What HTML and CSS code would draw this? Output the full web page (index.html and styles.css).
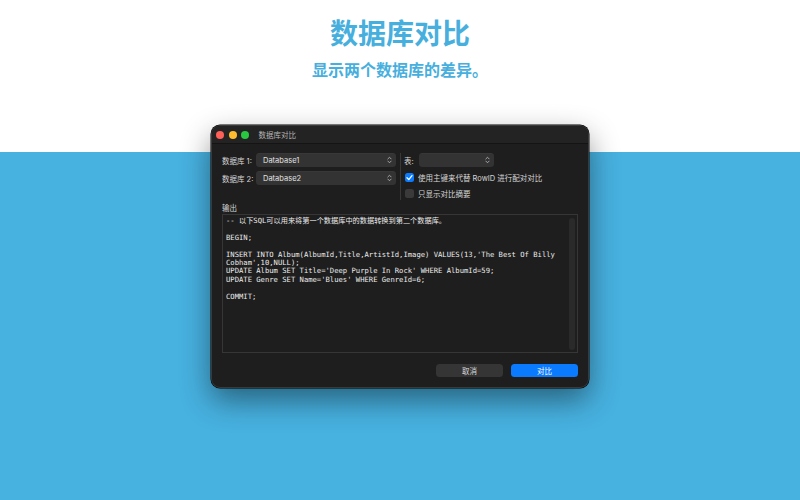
FILE: index.html
```html
<!DOCTYPE html>
<html lang="zh">
<head>
<meta charset="utf-8">
<link rel="stylesheet" href="styles.css">
</head>
<body>
<div class="page">
  <header class="hero">
    <h1 class="title">数据库对比</h1>
    <p class="subtitle">显示两个数据库的差异。</p>
  </header>
  <div class="band"></div>

  <div class="window">
    <div class="titlebar">
      <span class="light red"></span>
      <span class="light yellow"></span>
      <span class="light green"></span>
      <span class="wtitle">数据库对比</span>
    </div>
    <div class="content">
      <div class="top">
        <div class="dbcol">
          <div class="row">
            <span class="label">数据库 1:</span>
            <div class="select wide"><span>Database1</span><svg class="chev" viewBox="0 0 6 9"><path d="M1 3.2 L3 1.2 L5 3.2 M1 5.8 L3 7.8 L5 5.8" fill="none" stroke="#bbb" stroke-width="1" stroke-linecap="round" stroke-linejoin="round"/></svg></div>
          </div>
          <div class="row">
            <span class="label">数据库 2:</span>
            <div class="select wide"><span>Database2</span><svg class="chev" viewBox="0 0 6 9"><path d="M1 3.2 L3 1.2 L5 3.2 M1 5.8 L3 7.8 L5 5.8" fill="none" stroke="#bbb" stroke-width="1" stroke-linecap="round" stroke-linejoin="round"/></svg></div>
          </div>
        </div>
        <div class="divider"></div>
        <div class="optcol">
          <div class="row">
            <span class="label short">表:</span>
            <div class="select narrow"><span></span><svg class="chev" viewBox="0 0 6 9"><path d="M1 3.2 L3 1.2 L5 3.2 M1 5.8 L3 7.8 L5 5.8" fill="none" stroke="#bbb" stroke-width="1" stroke-linecap="round" stroke-linejoin="round"/></svg></div>
          </div>
          <div class="check-row">
            <span class="box on"><svg viewBox="0 0 9 9"><path d="M2 4.8 L3.8 6.6 L7 2.6" fill="none" stroke="#fff" stroke-width="1.3" stroke-linecap="round" stroke-linejoin="round"/></svg></span>
            <span class="ctext">使用主键来代替 RowID 进行配对对比</span>
          </div>
          <div class="check-row">
            <span class="box"></span>
            <span class="ctext">只显示对比摘要</span>
          </div>
        </div>
      </div>
      <div class="outlabel">输出</div>
      <div class="output">
<pre class="code">-- 以下SQL可以用来将第一个数据库中的数据转换到第二个数据库。

BEGIN;

INSERT INTO Album(AlbumId,Title,ArtistId,Image) VALUES(13,'The Best Of Billy
Cobham',10,NULL);
UPDATE Album SET Title='Deep Purple In Rock' WHERE AlbumId=59;
UPDATE Genre SET Name='Blues' WHERE GenreId=6;

COMMIT;</pre>
        <div class="scrollbar"></div>
      </div>
      <div class="footer">
        <button class="btn">取消</button>
        <button class="btn primary">对比</button>
      </div>
    </div>
  </div>
</div>
</body>
</html>
```

FILE: styles.css
```css
* { box-sizing: border-box; }
html, body { margin: 0; padding: 0; }
body {
  width: 800px;
  height: 500px;
  overflow: hidden;
  font-family: "Inter", "Noto Sans CJK SC", sans-serif;
  background: #fff;
}
.page {
  position: relative;
  width: 800px;
  height: 500px;
  display: flex;
  flex-direction: column;
}
.hero {
  height: 152px;
  display: flex;
  flex-direction: column;
  align-items: center;
  padding-top: 13px;
}
.title {
  margin: 0;
  font-family: "Noto Sans CJK SC", sans-serif;
  font-weight: 700;
  font-size: 28px;
  line-height: 38px;
  color: #47afde;
}
.subtitle {
  margin: 0;
  margin-top: 6px;
  font-family: "Noto Sans CJK SC", sans-serif;
  font-weight: 700;
  font-size: 16px;
  line-height: 24px;
  color: #47afde;
}
.band {
  flex: 1;
  background: #47b1e0;
}

.window {
  position: absolute;
  left: 211px;
  top: 125px;
  width: 378px;
  height: 263px;
  background: #1e1e1e;
  border-radius: 9px;
  border: 1px solid #3a3a3a;
  box-shadow: 0 12px 30px rgba(0,0,0,0.45), 0 0 0 0.5px #000;
  display: flex;
  flex-direction: column;
  overflow: hidden;
}
.titlebar {
  height: 18px;
  display: flex;
  align-items: center;
  padding-left: 4px;
  gap: 4.5px;
  background: #232323;
  border-bottom: 1px solid #141414;
}
.light {
  width: 8px;
  height: 8px;
  border-radius: 50%;
  display: block;
}
.red { background: #fe5f57; }
.yellow { background: #febc2e; }
.green { background: #28c840; }
.wtitle {
  margin-left: 5px;
  font-size: 7.5px;
  color: #b5b5b5;
  font-family: "Noto Sans CJK SC", sans-serif;
}
.content {
  flex: 1;
  display: flex;
  flex-direction: column;
  padding: 9px 10px 0 10px;
}
.top {
  display: flex;
  height: 47px;
}
.dbcol {
  display: flex;
  flex-direction: column;
  gap: 4px;
  width: 178px;
}
.row {
  display: flex;
  align-items: center;
  height: 14px;
}
.label {
  width: 34px;
  font-size: 7.5px;
  color: #d6d6d6;
  font-family: "Inter", "Noto Sans CJK SC", sans-serif;
}
.label.short { width: 15px; }
.select {
  height: 14px;
  background: #333333;
  border-radius: 3.5px;
  display: flex;
  align-items: center;
  justify-content: space-between;
  padding: 0 4px 0 7px;
  font-size: 7.5px;
  color: #e2e2e2;
  box-shadow: inset 0 0.5px 0 rgba(255,255,255,0.06);
}
.select.wide { width: 140px; }
.select.narrow { width: 75px; }
.chev { width: 5px; height: 8px; }
.divider {
  width: 1px;
  background: #383838;
  margin: 0 3px 0 0;
}
.optcol {
  display: flex;
  flex-direction: column;
}
.check-row {
  display: flex;
  align-items: center;
  gap: 4px;
  margin-top: 4px;
  height: 14px;
}
.check-row + .check-row { margin-top: 2px; }
.box {
  width: 9px;
  height: 9px;
  border-radius: 2.5px;
  background: #3a3a3a;
  display: flex;
  align-items: center;
  justify-content: center;
  margin-left: 1px;
}
.box.on { background: #0a7aff; }
.box svg { width: 9px; height: 9px; }
.ctext {
  font-size: 7.5px;
  color: #d6d6d6;
  font-family: "Inter", "Noto Sans CJK SC", sans-serif;
}
.outlabel {
  margin-top: 2px;
  font-size: 7.5px;
  color: #d6d6d6;
  font-family: "Noto Sans CJK SC", sans-serif;
  line-height: 11px;
}
.output {
  position: relative;
  margin-top: 1px;
  height: 139px;
  width: 356px;
  border: 1px solid #363636;
  background: #1e1e1e;
}
.code {
  margin: 0;
  padding: 2px 0 0 3px;
  font-family: "DejaVu Sans Mono", "Noto Sans CJK SC", monospace;
  font-size: 7.2px;
  line-height: 8.4px;
  color: #ececec;
  white-space: pre;
}
.scrollbar {
  position: absolute;
  right: 2px;
  top: 3px;
  bottom: 2px;
  width: 6px;
  border-radius: 3px;
  background: #2a2a2a;
}
.footer {
  display: flex;
  justify-content: flex-end;
  gap: 8px;
  margin-top: 11px;
}
.btn {
  width: 67px;
  height: 13px;
  border: none;
  border-radius: 3.5px;
  background: #353535;
  color: #dcdcdc;
  font-size: 7.5px;
  font-family: "Noto Sans CJK SC", sans-serif;
  padding: 0;
  line-height: 13px;
}
.btn.primary {
  background: #0a7aff;
  color: #fff;
}
```
